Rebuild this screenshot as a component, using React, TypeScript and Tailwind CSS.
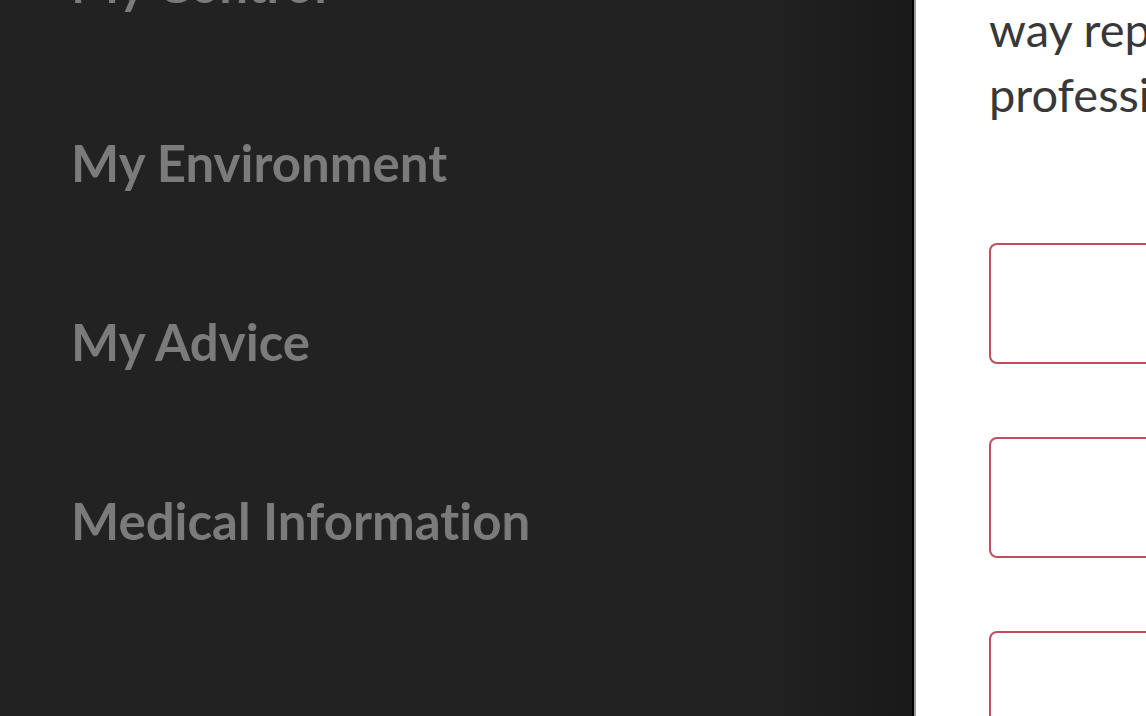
const menuItems = ["My Control", "My Environment", "My Advice", "Medical Information"];

const App = () => {
  return (
    <div className="flex h-[716px] w-[1146px] overflow-hidden bg-white">
      {/* sidebar menu */}
      <div className="w-[912px] shrink-0 bg-[linear-gradient(to_right,#222222_0%,#222222_84%,#191919_100%)] pl-[71px]">
        <div className="-mt-[106px] flex flex-col">
          {menuItems.map((item) => (
            <div
              key={item}
              className="text-[51px] font-bold leading-[179px] text-[#7b7b7b] whitespace-nowrap [font-variant-ligatures:none]"
              style={{ fontFamily: "Lato, 'Noto Sans', sans-serif" }}
            >
              {item}
            </div>
          ))}
        </div>
      </div>

      {/* divider line */}
      <div className="w-[2px] shrink-0 bg-[#050505]" />
      <div className="w-[2px] shrink-0 bg-[#9a9a9a]" />

      {/* content panel */}
      <div className="flex-1 overflow-hidden pl-[73px]">
        <div
          className="-mt-[3px] text-[47px] leading-[65px] text-[#383838] whitespace-nowrap [font-variant-ligatures:none]"
          style={{ fontFamily: "Lato, 'Noto Sans', sans-serif" }}
        >
          <div>way represents you to your</div>
          <div>professionals.</div>
        </div>

        <div className="mt-[116px] flex flex-col gap-[73px]">
          <div className="h-[121px] w-[600px] shrink-0 rounded-[8px] border-2 border-[#c04f5e]" />
          <div className="h-[121px] w-[600px] shrink-0 rounded-[8px] border-2 border-[#c04f5e]" />
          <div className="h-[121px] w-[600px] shrink-0 rounded-[8px] border-2 border-[#c04f5e]" />
        </div>
      </div>
    </div>
  );
};

export default App;
